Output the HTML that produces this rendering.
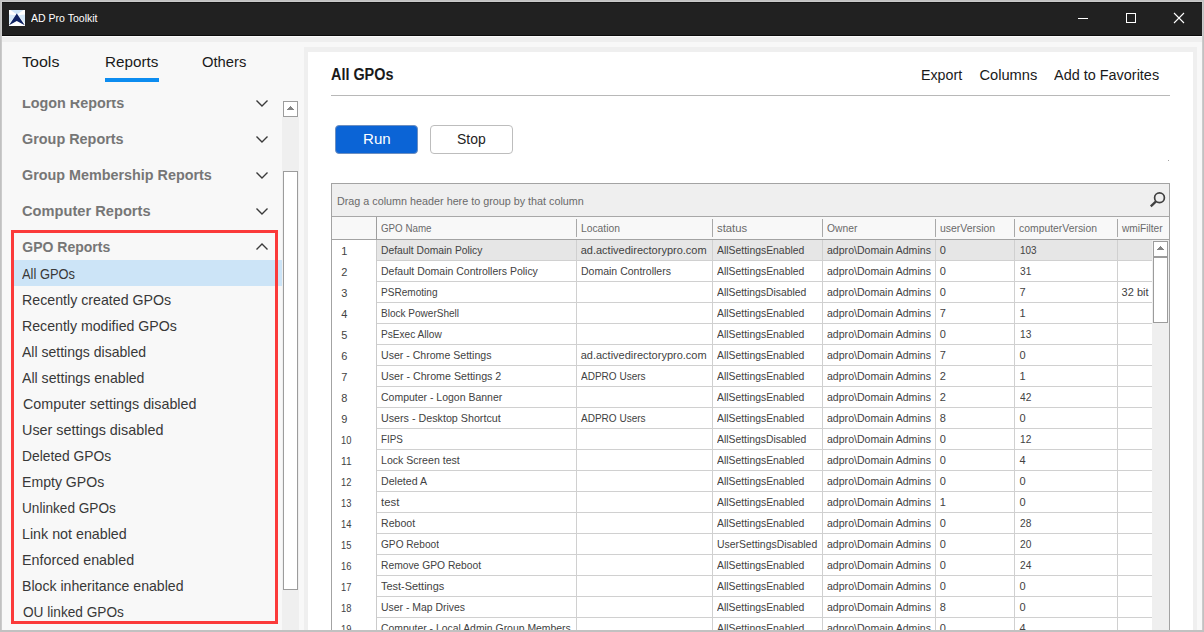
<!DOCTYPE html>
<html><head><meta charset="utf-8"><title>AD Pro Toolkit</title>
<style>
html,body{margin:0;padding:0}
body{width:1204px;height:632px;overflow:hidden;background:#c1c1c1;font-family:"Liberation Sans",sans-serif;position:relative}
div,span{position:absolute;box-sizing:border-box}
.t{white-space:pre;line-height:20px;transform-origin:0 50%}
#win{left:1px;top:1px;width:1202px;height:630px;background:#f8f8f8;border:1px solid #cbcbcb;overflow:hidden}
#all{left:0;top:0;width:1204px;height:630px;overflow:hidden}
#tb{left:2px;top:2px;width:1200px;height:34px;background:#212121;border-bottom:1px solid #0c0c0c;border-top:1px solid #141414}
#band{left:2px;top:36px;width:1200px;height:6px;background:#efefef;border-top:1px solid #fcfcfc}
#panel{left:304px;top:47px;width:893px;height:583px;background:#efefef}
#white{left:308px;top:52px;width:885px;height:578px;background:#fff}
#hr{left:331px;top:95px;width:839px;height:1px;background:#b8b8b8}
#run{left:335px;top:125px;width:83px;height:29px;background:#0b64d6;border:1px solid #6d8fc0;border-radius:4px}
#stop{left:430px;top:125px;width:83px;height:29px;background:#fff;border:1px solid #bdbdbd;border-radius:4px}
#grid{left:331px;top:183px;width:839px;height:460px;border:1px solid #a3a3a3;background:#fff}
#gp{left:332px;top:184px;width:837px;height:32px;background:#efefef}
#gpl{left:332px;top:216px;width:837px;height:1px;background:#a8a8a8}
#gh{left:332px;top:217px;width:837px;height:22px;background:#f8f8f8}
#ghl{left:332px;top:239px;width:837px;height:1px;background:#a3a3a3}
#c0{left:376px;top:217px;width:1px;height:23px;background:#9e9e9e}
#c0b{left:376px;top:240px;width:1px;height:400px;background:#cbcbcb}
#sel{left:377px;top:240px;width:775px;height:20px;background:#e6e6e6}
.hl{left:377px;width:775px;height:1px;background:#d0d0d0}
.vl{top:240px;width:1px;height:400px;background:#d0d0d0}
.hs{top:219px;width:1px;height:18px;background:#a8a8a8}
#vsb{left:1152px;top:240px;width:17px;height:400px;background:#efefef}
#vup{left:1153px;top:241px;width:15px;height:16px;background:#fff;border:1px solid #9c9c9c}
#vth{left:1153px;top:257px;width:15px;height:66px;background:#fff;border:1px solid #9c9c9c}
#ssb{left:282px;top:117px;width:17px;height:520px;background:#efefef}
#sup{left:283px;top:101px;width:15px;height:16px;background:#fff;border:1px solid #9c9c9c}
#sth{left:283px;top:171px;width:15px;height:419px;background:#fff;border:1px solid #9c9c9c}
.px{height:1px;background:#858585}
#hi{left:12px;top:260px;width:270px;height:26px;background:#cce4f7}
#red{left:11px;top:230px;width:267px;height:394px;border:3px solid #fb3a3a}
#ul{left:105px;top:78px;width:54px;height:4px;background:#0c8cf0}
#clip0{left:2px;top:100px;width:280px;height:30px;overflow:hidden}
svg{position:absolute;overflow:visible}
</style></head><body>
<div id="all">
<div id="win"></div>
<div id="tb"></div>
<div id="band"></div>
<div id="panel"></div>
<div id="white"></div>
<div id="hr"></div><div style="left:1168px;top:160px;width:1px;height:1px;background:#a4a4a4"></div>
<div id="run"></div>
<div id="stop"></div>
<div id="grid"></div>
<div id="gp"></div><div id="gpl"></div><div id="gh"></div><div id="ghl"></div>
<div id="sel"></div>
<div class="hl" style="top:260px"></div>
<div class="hl" style="top:281px"></div>
<div class="hl" style="top:302px"></div>
<div class="hl" style="top:323px"></div>
<div class="hl" style="top:344px"></div>
<div class="hl" style="top:365px"></div>
<div class="hl" style="top:386px"></div>
<div class="hl" style="top:407px"></div>
<div class="hl" style="top:428px"></div>
<div class="hl" style="top:449px"></div>
<div class="hl" style="top:470px"></div>
<div class="hl" style="top:491px"></div>
<div class="hl" style="top:512px"></div>
<div class="hl" style="top:533px"></div>
<div class="hl" style="top:554px"></div>
<div class="hl" style="top:575px"></div>
<div class="hl" style="top:596px"></div>
<div class="hl" style="top:617px"></div>
<div class="vl" style="left:576px"></div>
<div class="hs" style="left:576px"></div>
<div class="vl" style="left:712px"></div>
<div class="hs" style="left:712px"></div>
<div class="vl" style="left:822px"></div>
<div class="hs" style="left:822px"></div>
<div class="vl" style="left:935px"></div>
<div class="hs" style="left:935px"></div>
<div class="vl" style="left:1014px"></div>
<div class="hs" style="left:1014px"></div>
<div class="vl" style="left:1117px"></div>
<div class="hs" style="left:1117px"></div>
<div id="c0"></div><div id="c0b"></div>
<div id="vsb"></div><div id="vup"></div><div id="vth"></div>
<div class="px" style="left:1160px;top:246px;width:1px"></div><div class="px" style="left:1159px;top:247px;width:3px"></div><div class="px" style="left:1158px;top:248px;width:5px"></div><div class="px" style="left:1157px;top:249px;width:7px"></div>
<div id="ssb"></div><div id="sup"></div><div id="sth"></div>
<div class="px" style="left:290px;top:106px;width:1px"></div><div class="px" style="left:289px;top:107px;width:3px"></div><div class="px" style="left:288px;top:108px;width:5px"></div><div class="px" style="left:287px;top:109px;width:7px"></div>
<div id="hi"></div>
<div id="ul"></div>
<div id="clip0"><span class="t" style="left:20.30px;top:-6.85px;font-size:14px;color:#767676;font-weight:700;transform:scaleX(1.0260);">Logon Reports</span></div>
<span class="t" style="left:30.80px;top:8.19px;font-size:11px;color:#ffffff;transform:scaleX(0.9571);">AD Pro Toolkit</span>
<span class="t" style="left:22.30px;top:51.63px;font-size:15.5px;color:#1a1a1a;transform:scaleX(1.0333);">Tools</span>
<span class="t" style="left:104.52px;top:51.63px;font-size:15.5px;color:#1a1a1a;transform:scaleX(0.9830);">Reports</span>
<span class="t" style="left:202.20px;top:51.63px;font-size:15.5px;color:#1a1a1a;transform:scaleX(0.9532);">Others</span>
<span class="t" style="left:22.30px;top:129.15px;font-size:14px;color:#767676;font-weight:700;transform:scaleX(1.0283);">Group Reports</span>
<span class="t" style="left:22.30px;top:165.15px;font-size:14px;color:#767676;font-weight:700;transform:scaleX(1.0254);">Group Membership Reports</span>
<span class="t" style="left:22.30px;top:201.15px;font-size:14px;color:#767676;font-weight:700;transform:scaleX(1.0463);">Computer Reports</span>
<span class="t" style="left:22.30px;top:237.15px;font-size:14px;color:#767676;font-weight:700;">GPO Reports</span>
<span class="t" style="left:22.30px;top:263.80px;font-size:15px;color:#383838;transform:scaleX(0.8581);">All GPOs</span>
<span class="t" style="left:21.85px;top:289.80px;font-size:15px;color:#383838;transform:scaleX(0.9465);">Recently created GPOs</span>
<span class="t" style="left:21.86px;top:315.80px;font-size:15px;color:#383838;transform:scaleX(0.9429);">Recently modified GPOs</span>
<span class="t" style="left:22.20px;top:341.80px;font-size:15px;color:#383838;transform:scaleX(0.9356);">All settings disabled</span>
<span class="t" style="left:22.20px;top:367.80px;font-size:15px;color:#383838;transform:scaleX(0.9415);">All settings enabled</span>
<span class="t" style="left:22.80px;top:393.80px;font-size:15px;color:#383838;transform:scaleX(0.9544);">Computer settings disabled</span>
<span class="t" style="left:21.84px;top:419.80px;font-size:15px;color:#383838;transform:scaleX(0.9582);">User settings disabled</span>
<span class="t" style="left:21.88px;top:445.80px;font-size:15px;color:#383838;transform:scaleX(0.9219);">Deleted GPOs</span>
<span class="t" style="left:21.86px;top:471.80px;font-size:15px;color:#383838;transform:scaleX(0.9391);">Empty GPOs</span>
<span class="t" style="left:21.89px;top:497.80px;font-size:15px;color:#383838;transform:scaleX(0.9078);">Unlinked GPOs</span>
<span class="t" style="left:21.85px;top:523.80px;font-size:15px;color:#383838;transform:scaleX(0.9514);">Link not enabled</span>
<span class="t" style="left:21.85px;top:549.80px;font-size:15px;color:#383838;transform:scaleX(0.9534);">Enforced enabled</span>
<span class="t" style="left:21.86px;top:575.80px;font-size:15px;color:#383838;transform:scaleX(0.9404);">Block inheritance enabled</span>
<span class="t" style="left:22.50px;top:601.80px;font-size:15px;color:#383838;transform:scaleX(0.9099);">OU linked GPOs</span>
<span class="t" style="left:331.00px;top:64.59px;font-size:15.6px;color:#1a1a1a;font-weight:700;transform:scaleX(0.9235);">All GPOs</span>
<span class="t" style="left:921.03px;top:64.92px;font-size:14.67px;color:#1a1a1a;transform:scaleX(0.9714);">Export</span>
<span class="t" style="left:979.40px;top:64.92px;font-size:14.67px;color:#1a1a1a;">Columns</span>
<span class="t" style="left:1053.80px;top:64.92px;font-size:14.67px;color:#1a1a1a;transform:scaleX(0.9850);">Add to Favorites</span>
<span class="t" style="left:362.53px;top:128.83px;font-size:15.5px;color:#ffffff;transform:scaleX(0.9741);">Run</span>
<span class="t" style="left:457.40px;top:128.83px;font-size:15.5px;color:#222;transform:scaleX(0.9000);">Stop</span>
<span class="t" style="left:336.60px;top:191.19px;font-size:11px;color:#6a6a6a;transform:scaleX(0.9798);">Drag a column header here to group by that column</span>
<span class="t" style="left:380.70px;top:217.99px;font-size:11px;color:#6a6a6a;transform:scaleX(0.8877);">GPO Name</span>
<span class="t" style="left:580.70px;top:217.99px;font-size:11px;color:#6a6a6a;transform:scaleX(0.9357);">Location</span>
<span class="t" style="left:716.80px;top:217.99px;font-size:11px;color:#6a6a6a;transform:scaleX(1.0241);">status</span>
<span class="t" style="left:826.90px;top:217.99px;font-size:11px;color:#6a6a6a;transform:scaleX(0.9364);">Owner</span>
<span class="t" style="left:939.80px;top:217.99px;font-size:11px;color:#6a6a6a;transform:scaleX(0.9500);">userVersion</span>
<span class="t" style="left:1019.40px;top:217.99px;font-size:11px;color:#6a6a6a;transform:scaleX(0.9446);">computerVersion</span>
<span class="t" style="left:1121.60px;top:217.99px;font-size:11px;color:#6a6a6a;transform:scaleX(0.9227);">wmiFilter</span>
<span class="t" style="left:341.30px;top:241.09px;font-size:11px;color:#424242;">1</span>
<span class="t" style="left:380.70px;top:240.09px;font-size:11px;color:#424242;transform:scaleX(0.9367);">Default Domain Policy</span>
<span class="t" style="left:580.70px;top:240.09px;font-size:11px;color:#424242;">ad.activedirectorypro.com</span>
<span class="t" style="left:716.80px;top:240.09px;font-size:11px;color:#424242;transform:scaleX(0.9457);">AllSettingsEnabled</span>
<span class="t" style="left:826.90px;top:240.09px;font-size:11px;color:#424242;transform:scaleX(0.9602);">adpro\Domain Admins</span>
<span class="t" style="left:939.80px;top:240.09px;font-size:11px;color:#424242;">0</span>
<span class="t" style="left:1019.60px;top:240.09px;font-size:11px;color:#424242;transform:scaleX(0.9000);">103</span>
<span class="t" style="left:341.30px;top:262.09px;font-size:11px;color:#424242;">2</span>
<span class="t" style="left:380.70px;top:261.09px;font-size:11px;color:#424242;transform:scaleX(0.9539);">Default Domain Controllers Policy</span>
<span class="t" style="left:580.70px;top:261.09px;font-size:11px;color:#424242;transform:scaleX(0.9553);">Domain Controllers</span>
<span class="t" style="left:716.80px;top:261.09px;font-size:11px;color:#424242;transform:scaleX(0.9457);">AllSettingsEnabled</span>
<span class="t" style="left:826.90px;top:261.09px;font-size:11px;color:#424242;transform:scaleX(0.9602);">adpro\Domain Admins</span>
<span class="t" style="left:939.80px;top:261.09px;font-size:11px;color:#424242;">0</span>
<span class="t" style="left:1019.60px;top:261.09px;font-size:11px;color:#424242;transform:scaleX(0.9250);">31</span>
<span class="t" style="left:341.30px;top:283.09px;font-size:11px;color:#424242;">3</span>
<span class="t" style="left:380.70px;top:282.09px;font-size:11px;color:#424242;transform:scaleX(0.9145);">PSRemoting</span>
<span class="t" style="left:716.80px;top:282.09px;font-size:11px;color:#424242;transform:scaleX(0.9421);">AllSettingsDisabled</span>
<span class="t" style="left:826.90px;top:282.09px;font-size:11px;color:#424242;transform:scaleX(0.9602);">adpro\Domain Admins</span>
<span class="t" style="left:939.80px;top:282.09px;font-size:11px;color:#424242;">0</span>
<span class="t" style="left:1019.60px;top:282.09px;font-size:11px;color:#424242;">7</span>
<span class="t" style="left:1121.60px;top:282.09px;font-size:11px;color:#424242;">32 bit</span>
<span class="t" style="left:341.30px;top:304.09px;font-size:11px;color:#424242;">4</span>
<span class="t" style="left:380.70px;top:303.09px;font-size:11px;color:#424242;transform:scaleX(0.9116);">Block PowerShell</span>
<span class="t" style="left:716.80px;top:303.09px;font-size:11px;color:#424242;transform:scaleX(0.9457);">AllSettingsEnabled</span>
<span class="t" style="left:826.90px;top:303.09px;font-size:11px;color:#424242;transform:scaleX(0.9602);">adpro\Domain Admins</span>
<span class="t" style="left:939.80px;top:303.09px;font-size:11px;color:#424242;">7</span>
<span class="t" style="left:1019.60px;top:303.09px;font-size:11px;color:#424242;">1</span>
<span class="t" style="left:341.30px;top:325.09px;font-size:11px;color:#424242;">5</span>
<span class="t" style="left:380.70px;top:324.09px;font-size:11px;color:#424242;transform:scaleX(0.9194);">PsExec Allow</span>
<span class="t" style="left:716.80px;top:324.09px;font-size:11px;color:#424242;transform:scaleX(0.9457);">AllSettingsEnabled</span>
<span class="t" style="left:826.90px;top:324.09px;font-size:11px;color:#424242;transform:scaleX(0.9602);">adpro\Domain Admins</span>
<span class="t" style="left:939.80px;top:324.09px;font-size:11px;color:#424242;">0</span>
<span class="t" style="left:1019.60px;top:324.09px;font-size:11px;color:#424242;transform:scaleX(0.9250);">13</span>
<span class="t" style="left:341.30px;top:346.09px;font-size:11px;color:#424242;">6</span>
<span class="t" style="left:380.70px;top:345.09px;font-size:11px;color:#424242;transform:scaleX(0.9609);">User - Chrome Settings</span>
<span class="t" style="left:580.70px;top:345.09px;font-size:11px;color:#424242;">ad.activedirectorypro.com</span>
<span class="t" style="left:716.80px;top:345.09px;font-size:11px;color:#424242;transform:scaleX(0.9457);">AllSettingsEnabled</span>
<span class="t" style="left:826.90px;top:345.09px;font-size:11px;color:#424242;transform:scaleX(0.9602);">adpro\Domain Admins</span>
<span class="t" style="left:939.80px;top:345.09px;font-size:11px;color:#424242;">7</span>
<span class="t" style="left:1019.60px;top:345.09px;font-size:11px;color:#424242;">0</span>
<span class="t" style="left:341.30px;top:367.09px;font-size:11px;color:#424242;">7</span>
<span class="t" style="left:380.70px;top:366.09px;font-size:11px;color:#424242;transform:scaleX(0.9694);">User - Chrome Settings 2</span>
<span class="t" style="left:580.70px;top:366.09px;font-size:11px;color:#424242;transform:scaleX(0.9113);">ADPRO Users</span>
<span class="t" style="left:716.80px;top:366.09px;font-size:11px;color:#424242;transform:scaleX(0.9457);">AllSettingsEnabled</span>
<span class="t" style="left:826.90px;top:366.09px;font-size:11px;color:#424242;transform:scaleX(0.9602);">adpro\Domain Admins</span>
<span class="t" style="left:939.80px;top:366.09px;font-size:11px;color:#424242;">2</span>
<span class="t" style="left:1019.60px;top:366.09px;font-size:11px;color:#424242;">1</span>
<span class="t" style="left:341.30px;top:388.09px;font-size:11px;color:#424242;">8</span>
<span class="t" style="left:380.70px;top:387.09px;font-size:11px;color:#424242;transform:scaleX(0.9531);">Computer - Logon Banner</span>
<span class="t" style="left:716.80px;top:387.09px;font-size:11px;color:#424242;transform:scaleX(0.9457);">AllSettingsEnabled</span>
<span class="t" style="left:826.90px;top:387.09px;font-size:11px;color:#424242;transform:scaleX(0.9602);">adpro\Domain Admins</span>
<span class="t" style="left:939.80px;top:387.09px;font-size:11px;color:#424242;">2</span>
<span class="t" style="left:1019.60px;top:387.09px;font-size:11px;color:#424242;transform:scaleX(0.9250);">42</span>
<span class="t" style="left:341.30px;top:409.09px;font-size:11px;color:#424242;">9</span>
<span class="t" style="left:380.70px;top:408.09px;font-size:11px;color:#424242;transform:scaleX(0.9740);">Users - Desktop Shortcut</span>
<span class="t" style="left:580.70px;top:408.09px;font-size:11px;color:#424242;transform:scaleX(0.9113);">ADPRO Users</span>
<span class="t" style="left:716.80px;top:408.09px;font-size:11px;color:#424242;transform:scaleX(0.9457);">AllSettingsEnabled</span>
<span class="t" style="left:826.90px;top:408.09px;font-size:11px;color:#424242;transform:scaleX(0.9602);">adpro\Domain Admins</span>
<span class="t" style="left:939.80px;top:408.09px;font-size:11px;color:#424242;">8</span>
<span class="t" style="left:1019.60px;top:408.09px;font-size:11px;color:#424242;">0</span>
<span class="t" style="left:341.00px;top:430.09px;font-size:11px;color:#424242;transform:scaleX(0.8500);">10</span>
<span class="t" style="left:380.70px;top:429.09px;font-size:11px;color:#424242;transform:scaleX(0.8958);">FIPS</span>
<span class="t" style="left:716.80px;top:429.09px;font-size:11px;color:#424242;transform:scaleX(0.9421);">AllSettingsDisabled</span>
<span class="t" style="left:826.90px;top:429.09px;font-size:11px;color:#424242;transform:scaleX(0.9602);">adpro\Domain Admins</span>
<span class="t" style="left:939.80px;top:429.09px;font-size:11px;color:#424242;">0</span>
<span class="t" style="left:1019.60px;top:429.09px;font-size:11px;color:#424242;transform:scaleX(0.9250);">12</span>
<span class="t" style="left:341.00px;top:451.09px;font-size:11px;color:#424242;transform:scaleX(0.9273);">11</span>
<span class="t" style="left:380.70px;top:450.09px;font-size:11px;color:#424242;transform:scaleX(0.9610);">Lock Screen test</span>
<span class="t" style="left:716.80px;top:450.09px;font-size:11px;color:#424242;transform:scaleX(0.9457);">AllSettingsEnabled</span>
<span class="t" style="left:826.90px;top:450.09px;font-size:11px;color:#424242;transform:scaleX(0.9602);">adpro\Domain Admins</span>
<span class="t" style="left:939.80px;top:450.09px;font-size:11px;color:#424242;">0</span>
<span class="t" style="left:1019.60px;top:450.09px;font-size:11px;color:#424242;">4</span>
<span class="t" style="left:341.00px;top:472.09px;font-size:11px;color:#424242;transform:scaleX(0.8500);">12</span>
<span class="t" style="left:380.70px;top:471.09px;font-size:11px;color:#424242;transform:scaleX(0.9646);">Deleted A</span>
<span class="t" style="left:716.80px;top:471.09px;font-size:11px;color:#424242;transform:scaleX(0.9457);">AllSettingsEnabled</span>
<span class="t" style="left:826.90px;top:471.09px;font-size:11px;color:#424242;transform:scaleX(0.9602);">adpro\Domain Admins</span>
<span class="t" style="left:939.80px;top:471.09px;font-size:11px;color:#424242;">0</span>
<span class="t" style="left:1019.60px;top:471.09px;font-size:11px;color:#424242;">0</span>
<span class="t" style="left:341.00px;top:493.09px;font-size:11px;color:#424242;transform:scaleX(0.8500);">13</span>
<span class="t" style="left:380.70px;top:492.09px;font-size:11px;color:#424242;transform:scaleX(1.0333);">test</span>
<span class="t" style="left:716.80px;top:492.09px;font-size:11px;color:#424242;transform:scaleX(0.9457);">AllSettingsEnabled</span>
<span class="t" style="left:826.90px;top:492.09px;font-size:11px;color:#424242;transform:scaleX(0.9602);">adpro\Domain Admins</span>
<span class="t" style="left:939.80px;top:492.09px;font-size:11px;color:#424242;">1</span>
<span class="t" style="left:1019.60px;top:492.09px;font-size:11px;color:#424242;">0</span>
<span class="t" style="left:341.00px;top:514.09px;font-size:11px;color:#424242;transform:scaleX(0.8500);">14</span>
<span class="t" style="left:380.70px;top:513.09px;font-size:11px;color:#424242;transform:scaleX(0.9611);">Reboot</span>
<span class="t" style="left:716.80px;top:513.09px;font-size:11px;color:#424242;transform:scaleX(0.9457);">AllSettingsEnabled</span>
<span class="t" style="left:826.90px;top:513.09px;font-size:11px;color:#424242;transform:scaleX(0.9602);">adpro\Domain Admins</span>
<span class="t" style="left:939.80px;top:513.09px;font-size:11px;color:#424242;">0</span>
<span class="t" style="left:1019.60px;top:513.09px;font-size:11px;color:#424242;transform:scaleX(0.9250);">28</span>
<span class="t" style="left:341.00px;top:535.09px;font-size:11px;color:#424242;transform:scaleX(0.8500);">15</span>
<span class="t" style="left:380.70px;top:534.09px;font-size:11px;color:#424242;transform:scaleX(0.9203);">GPO Reboot</span>
<span class="t" style="left:716.80px;top:534.09px;font-size:11px;color:#424242;transform:scaleX(0.9472);">UserSettingsDisabled</span>
<span class="t" style="left:826.90px;top:534.09px;font-size:11px;color:#424242;transform:scaleX(0.9602);">adpro\Domain Admins</span>
<span class="t" style="left:939.80px;top:534.09px;font-size:11px;color:#424242;">0</span>
<span class="t" style="left:1019.60px;top:534.09px;font-size:11px;color:#424242;transform:scaleX(0.9250);">20</span>
<span class="t" style="left:341.00px;top:556.09px;font-size:11px;color:#424242;transform:scaleX(0.8500);">16</span>
<span class="t" style="left:380.70px;top:555.09px;font-size:11px;color:#424242;transform:scaleX(0.9352);">Remove GPO Reboot</span>
<span class="t" style="left:716.80px;top:555.09px;font-size:11px;color:#424242;transform:scaleX(0.9457);">AllSettingsEnabled</span>
<span class="t" style="left:826.90px;top:555.09px;font-size:11px;color:#424242;transform:scaleX(0.9602);">adpro\Domain Admins</span>
<span class="t" style="left:939.80px;top:555.09px;font-size:11px;color:#424242;">0</span>
<span class="t" style="left:1019.60px;top:555.09px;font-size:11px;color:#424242;transform:scaleX(0.9250);">24</span>
<span class="t" style="left:341.00px;top:577.09px;font-size:11px;color:#424242;transform:scaleX(0.8500);">17</span>
<span class="t" style="left:380.70px;top:576.09px;font-size:11px;color:#424242;transform:scaleX(0.9938);">Test-Settings</span>
<span class="t" style="left:716.80px;top:576.09px;font-size:11px;color:#424242;transform:scaleX(0.9457);">AllSettingsEnabled</span>
<span class="t" style="left:826.90px;top:576.09px;font-size:11px;color:#424242;transform:scaleX(0.9602);">adpro\Domain Admins</span>
<span class="t" style="left:939.80px;top:576.09px;font-size:11px;color:#424242;">0</span>
<span class="t" style="left:1019.60px;top:576.09px;font-size:11px;color:#424242;">0</span>
<span class="t" style="left:341.00px;top:598.09px;font-size:11px;color:#424242;transform:scaleX(0.8500);">18</span>
<span class="t" style="left:380.70px;top:597.09px;font-size:11px;color:#424242;transform:scaleX(0.9483);">User - Map Drives</span>
<span class="t" style="left:716.80px;top:597.09px;font-size:11px;color:#424242;transform:scaleX(0.9457);">AllSettingsEnabled</span>
<span class="t" style="left:826.90px;top:597.09px;font-size:11px;color:#424242;transform:scaleX(0.9602);">adpro\Domain Admins</span>
<span class="t" style="left:939.80px;top:597.09px;font-size:11px;color:#424242;">8</span>
<span class="t" style="left:1019.60px;top:597.09px;font-size:11px;color:#424242;">0</span>
<span class="t" style="left:341.00px;top:619.09px;font-size:11px;color:#424242;transform:scaleX(0.8500);">19</span>
<span class="t" style="left:380.70px;top:618.09px;font-size:11px;color:#424242;transform:scaleX(0.9463);">Computer - Local Admin Group Members</span>
<span class="t" style="left:716.80px;top:618.09px;font-size:11px;color:#424242;transform:scaleX(0.9457);">AllSettingsEnabled</span>
<span class="t" style="left:826.90px;top:618.09px;font-size:11px;color:#424242;transform:scaleX(0.9602);">adpro\Domain Admins</span>
<span class="t" style="left:939.80px;top:618.09px;font-size:11px;color:#424242;">0</span>
<span class="t" style="left:1019.60px;top:618.09px;font-size:11px;color:#424242;">4</span>
<div id="red"></div>
<!-- icons -->
<svg id="ico" style="left:9px;top:10px" width="16" height="16" viewBox="0 0 16 16">
 <rect x="0" y="0" width="16" height="16" fill="#ffffff"/>
 <polygon points="1.5,0 14.5,0 8,4.5" fill="#cfe6f8"/>
 <polygon points="0,4.500 6.8,5.200 0,13.500" fill="#d6eafa"/>
 <polygon points="16,4.500 9.200,5.200 16,13.500" fill="#d6eafa"/>
 <polygon points="7.800,3.500 15.800,15.200 7.800,10.900 0,15.200" fill="#0f2363"/>
</svg>
<svg style="left:0;top:0" width="1204" height="632" viewBox="0 0 1204 632" fill="none">
 <!-- window controls -->
 <path d="M1078 18.5H1088" stroke="#fff" stroke-width="1"/>
 <rect x="1126.5" y="13.5" width="9" height="9" stroke="#fff" stroke-width="1"/>
 <path d="M1174 13L1184 23M1184 13L1174 23" stroke="#fff" stroke-width="1.1"/>
 <!-- chevrons -->
 <g stroke="#3a3a3a" stroke-width="1.4">
  <path d="M256.5 100.5L262 106L267.500 100.5"/>
  <path d="M256.5 136.5L262 142L267.500 136.5"/>
  <path d="M256.5 172.5L262 178L267.500 172.5"/>
  <path d="M256.5 208.5L262 214L267.500 208.5"/>
  <path d="M256.5 249.5L262 244L267.500 249.5"/>
 </g>
 <!-- search -->
 <circle cx="1159.500" cy="197.700" r="4.900" stroke="#404040" stroke-width="1.7"/>
 <path d="M1156 201.400L1150.800 206.400" stroke="#404040" stroke-width="2.3"/>
</svg>
</div>
</body></html>
